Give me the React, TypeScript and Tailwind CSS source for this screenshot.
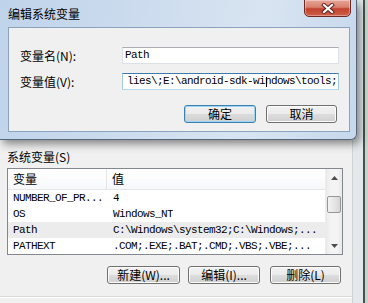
import React from "react";

const cjk = "font-['Noto_Sans_CJK_SC','Noto_Sans',sans-serif]";
const mono = "font-['Liberation_Mono','DejaVu_Sans_Mono',monospace] text-[11px] tracking-[-0.6px]";

function WinButton({ label, w, primary }: { label: string; w: string; primary?: boolean }) {
  return (
    <div
      className={`${w} h-[18px] rounded-[3px] border flex items-center justify-center text-[12px] leading-[12px] text-black ${
        primary
          ? "border-[#3c7fb1] shadow-[inset_0_0_0_1px_#9ad6f5] bg-[linear-gradient(#f1f1f1_0%,#ebebeb_50%,#dcdcdc_51%,#cfcfcf_100%)]"
          : "border-[#707070] shadow-[inset_0_0_0_1px_#fcfcfc] bg-[linear-gradient(#f2f2f2_0%,#ebebeb_50%,#dddddd_51%,#cfcfcf_100%)]"
      }`}
    >
      {label}
    </div>
  );
}

function Arrow({ up }: { up?: boolean }) {
  return (
    <svg width="7" height="4" viewBox="0 0 7 4">
      {up ? <path d="M0 4 L3.5 0 L7 4 Z" fill="#4d4d4d" /> : <path d="M0 0 L3.5 4 L7 0 Z" fill="#4d4d4d" />}
    </svg>
  );
}

const rows: [string, string, boolean][] = [
  ["NUMBER_OF_PR...", "4", false],
  ["OS", "Windows_NT", false],
  ["Path", "C:\\Windows\\system32;C:\\Windows;...", true],
  ["PATHEXT", ".COM;.EXE;.BAT;.CMD;.VBS;.VBE;...", false],
];

export default function App() {
  return (
    <div className={`relative w-[368px] h-[303px] overflow-hidden bg-[#f0f0f0] ${cjk} text-black`}>
      {/* background window */}
      <div className="flex w-full h-full">
        <div className="w-[352px] h-full flex flex-col">
          <div className="pt-[151px] pl-[7px] h-[163px] text-[12px] leading-[12px]">系统变量(S)</div>
          <div className="ml-[7px] mt-[5px] w-[336px] h-[87px] border border-[#828790] bg-white flex overflow-hidden">
            <div className="flex-1 flex flex-col">
              <div className="h-[26px] flex border-b border-[#e5e5e5] bg-[linear-gradient(#ffffff,#f7f8fa)] text-[12px] leading-[12px]">
                <div className="w-[99px] pl-[5px] flex items-center border-r border-[#e5e5e5]">变量</div>
                <div className="pl-[5px] flex items-center">值</div>
              </div>
              {rows.map(([n, v, sel]) => (
                <div key={n} className={`h-[16px] shrink-0 flex items-center ${mono} ${sel ? "bg-[#ececec]" : ""}`}>
                  <div className="w-[99px] pl-[5px] whitespace-nowrap overflow-hidden">{n}</div>
                  <div className="pl-[6px] whitespace-nowrap overflow-hidden">{v}</div>
                </div>
              ))}
            </div>
            <div className="w-[17px] h-full flex flex-col bg-[linear-gradient(90deg,#e9e9e9,#f4f4f4_30%,#f4f4f4_70%,#e9e9e9)] border-l border-[#ececec]">
              <div className="h-[17px] flex items-center justify-center">
                <Arrow up />
              </div>
              <div className="mt-[10px] mx-[1px] h-[17px] rounded-[2px] border border-[#979797] bg-[linear-gradient(90deg,#f3f3f3,#e6e6e6_50%,#d6d6d6)]" />
              <div className="flex-1" />
              <div className="h-[17px] flex items-center justify-center">
                <Arrow />
              </div>
            </div>
          </div>
          <div className="mt-[11px] pr-[11px] flex justify-end">
            <WinButton label="新建(W)..." w="w-[73px]" />
            <div className="w-[8px]" />
            <WinButton label="编辑(I)..." w="w-[72px]" />
            <div className="w-[10px]" />
            <WinButton label="删除(L)" w="w-[71px]" />
          </div>
          <div className="mt-[12px] border-t border-[#d9d9d9] border-b border-b-white" />
        </div>
        <div className="flex-1 h-full flex bg-[#e4e8ea] border-l border-[#cfd3d6]">
          <div className="w-[10px]" />
          <div className="w-[2px] bg-[#3f564a]" />
          <div className="flex-1 bg-[#c9d2cc]" />
        </div>
      </div>

      {/* foreground dialog */}
      <div className="absolute left-0 top-0 w-[357px] h-[140px] rounded-br-[6px] border-r border-b border-[#56677a] bg-[linear-gradient(100deg,#bfd3ea_0%,#cddcee_40%,#d8e4f1_70%,#c6d8ec_100%)] shadow-[3px_4px_9px_rgba(0,0,0,0.45)] flex flex-col">
        <div className="h-[27px] pl-[8px] flex items-center text-[12px] leading-[12px] text-black">编辑系统变量</div>
        <div className="ml-[8px] w-[342px] h-[105px] border border-[#8ca3bd] bg-[#f0f0f0] flex flex-col pt-[19px] pl-[11px]">
          <div className="h-[17px] flex items-center">
            <div className="w-[102px] text-[12px] leading-[12px]">变量名(N):</div>
            <div className={`w-[217px] h-[17px] bg-white border border-[#dbdfe6] border-t-[#abadb3] flex items-center pl-[2px] ${mono}`}>
              Path
            </div>
          </div>
          <div className="h-[17px] mt-[9px] flex items-center">
            <div className="w-[102px] text-[12px] leading-[12px]">变量值(V):</div>
            <div className={`relative w-[217px] h-[17px] bg-white border border-[#a4c9e3] border-t-[#3d7bad] border-b-[#b7d9ed] flex items-center justify-end pr-[1px] overflow-hidden ${mono}`}>
              <span className="whitespace-nowrap">lies\;E:\android-sdk-windows\tools;</span>
              <div className="absolute left-[143px] top-[3px] w-[1px] h-[10px] bg-black" />
            </div>
          </div>
          <div className="mt-[15px] pr-[12px] flex justify-end gap-[10px]">
            <WinButton label="确定" w="w-[72px]" primary />
            <WinButton label="取消" w="w-[71px]" />
          </div>
        </div>
        {/* close button */}
        <div className="absolute left-[304px] top-[-1px] w-[47px] h-[18px] rounded-b-[5px] border border-[#6e2a22] bg-[linear-gradient(#e7a597_0%,#d8806f_45%,#c0432f_55%,#d0604a_100%)] shadow-[inset_0_0_0_1px_rgba(255,255,255,0.35)] flex items-center justify-center">
          <svg width="14" height="11" viewBox="0 0 14 11">
            <path d="M3 2 L11 9 M11 2 L3 9" stroke="#5a1d16" strokeWidth="4" strokeLinecap="square" />
            <path d="M3 2 L11 9 M11 2 L3 9" stroke="#ffffff" strokeWidth="2.2" strokeLinecap="square" />
          </svg>
        </div>
      </div>
    </div>
  );
}
